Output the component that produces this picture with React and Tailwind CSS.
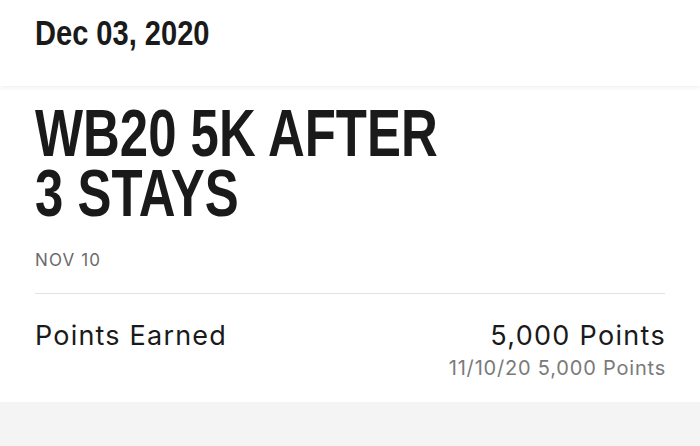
import React from "react";

export default function App() {
  return (
    <div className="w-[700px] h-[446px] bg-[#f4f4f4] overflow-hidden">
      {/* Date header */}
      <div className="h-[86px] bg-white px-[35px] pt-[11px] shadow-[0_2px_4px_rgba(0,0,0,0.06)] relative z-10">
        <h2 className="inline-block origin-left scale-x-[0.83] font-['Liberation_Sans',sans-serif] text-[35px] font-bold leading-[44px] text-[#1a1a1a] whitespace-nowrap">
          Dec 03, 2020
        </h2>
      </div>

      {/* Activity card */}
      <div className="bg-white px-[35px] pt-[17px] h-[316px]">
        <h1 className="inline-block origin-left scale-x-[0.76] font-['Liberation_Sans',sans-serif] text-[67px] font-bold leading-[60px] text-[#1a1a1a] uppercase whitespace-nowrap">
          WB20 5K AFTER
          <br />
          3 STAYS
        </h1>
        <p className="mt-[27px] font-['Inter',sans-serif] text-[17px] tracking-[1.1px] text-[#6b6b6b] leading-[20px]">
          NOV 10
        </p>
        <div className="mt-[23px] border-t border-[#e2e2e2]" />
        <div className="flex justify-between items-start pt-[26px] font-['Inter',sans-serif]">
          <span className="text-[27px] tracking-[1.2px] text-[#1a1a1a] leading-[32px]">Points Earned</span>
          <div className="text-right -mr-[1px]">
            <div className="text-[27px] tracking-[1.3px] text-[#1a1a1a] leading-[32px]">5,000 Points</div>
            <div className="text-[20px] tracking-[0.8px] text-[#7a7a7a] leading-[24px] mt-[4px]">11/10/20 5,000 Points</div>
          </div>
        </div>
      </div>
    </div>
  );
}
